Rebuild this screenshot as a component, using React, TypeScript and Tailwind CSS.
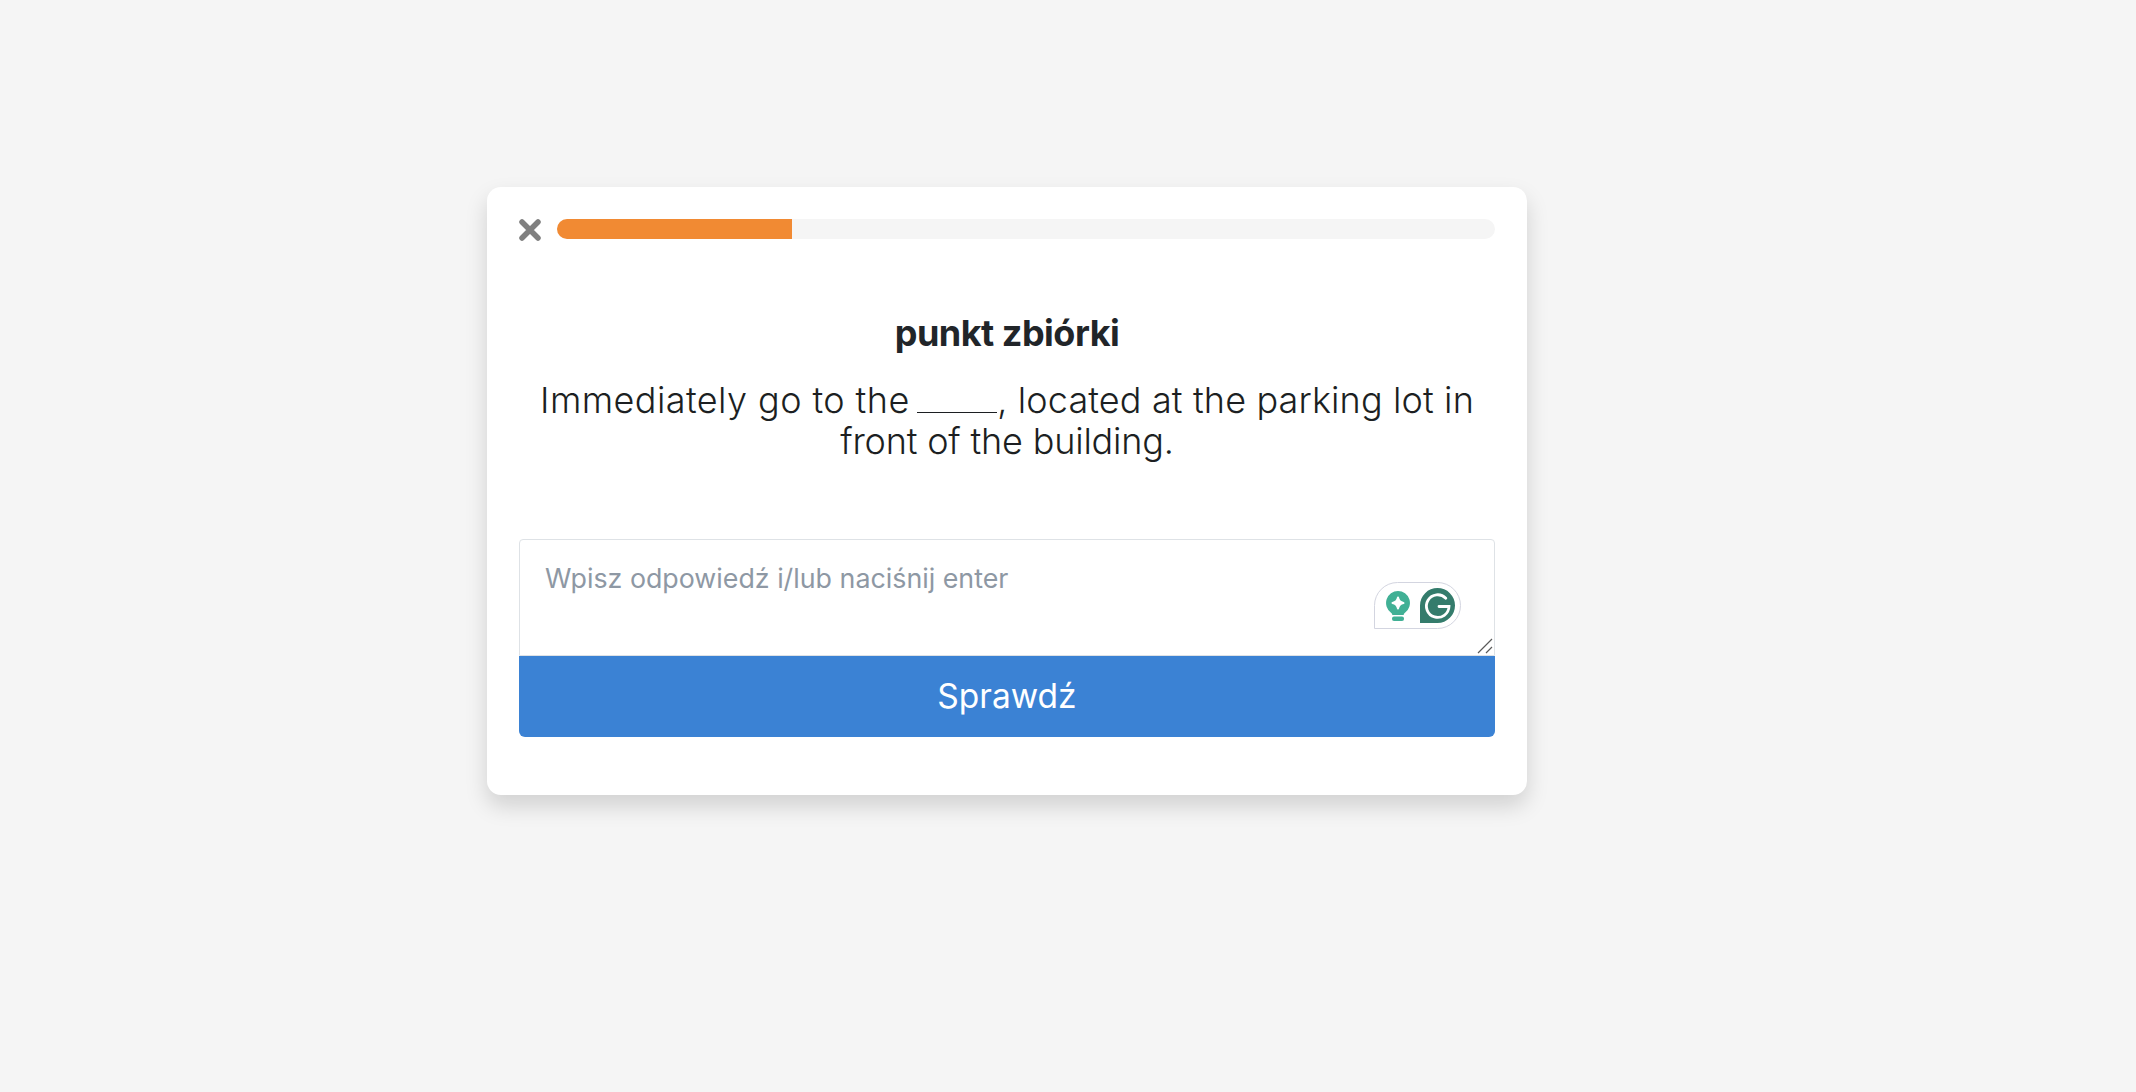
const GrammarlyBadge = () => (
  <div className="absolute left-[855px] top-[43px] flex h-[47px] w-[87px] items-center gap-[10px] rounded-[24px] rounded-bl-none border border-[#d3d5e0] bg-white pl-[11px]">
    <svg width="24" height="30" viewBox="0 0 24 30">
      <path d="M12 0a12 12 0 0 0-7 21.700c.9.7 1.200 1.300 1.300 2.300h11.400c.1-1 .4-1.600 1.300-2.300A12 12 0 0 0 12 0z" fill="#41b095" />
      <path d="M12 6.500c.7 3.600 2 4.800 5.500 5.500-3.500.7-4.800 1.900-5.500 5.500-.7-3.600-2-4.800-5.500-5.500 3.500-.7 4.800-1.900 5.500-5.500z" fill="#fff" stroke="#fff" strokeWidth="2" strokeLinejoin="round" />
      <rect x="6" y="25.500" width="12" height="4.500" rx="2" fill="#41b095" />
    </svg>
    <svg width="35" height="35" viewBox="0 0 35 35">
      <path d="M17.500 0a17.500 17.500 0 0 1 0 35H0V17.500A17.500 17.500 0 0 1 17.500 0z" fill="#347c6c" />
      <path d="M25.800 10.200a11.300 11.300 0 1 0 3.200 8.300H19" fill="none" stroke="#fff" strokeWidth="2.800" strokeLinecap="round" />
    </svg>
  </div>
);

const ResizeHandle = () => (
  <svg className="absolute left-[958px] top-[99px]" width="16" height="16" viewBox="0 0 16 16">
    <path d="M1 15L15 1M9 15l6-6" stroke="#5a5a5a" strokeWidth="1.200" />
  </svg>
);

export default function App() {
  return (
    <div className="min-h-[1092px] bg-[#f5f5f5] pl-[487px] pt-[187px] font-['Inter',sans-serif]">
      <div className="h-[608px] w-[1040px] rounded-[14px] bg-white p-[32px] shadow-[0_11px_22px_rgba(0,0,0,0.15)]">
        <div className="flex items-center gap-[16px]">
          <svg className="-mb-[2px]" width="22" height="22" viewBox="0 0 22 22">
            <path d="M3 3l16 16M19 3L3 19" stroke="#808080" strokeWidth="5.500" strokeLinecap="round" />
          </svg>
          <div className="h-[20px] flex-1 overflow-hidden rounded-[10px] bg-[#f5f5f5]">
            <div className="h-full w-[235px] bg-[#f18a33]" />
          </div>
        </div>

        <h1 className="mt-[72px] text-center text-[36px] leading-[44px] font-bold tracking-[-0.5px] text-[#212529]">
          punkt zbiórki
        </h1>
        <p className="mt-[25px] text-center text-[36px] leading-[41px] font-light tracking-[0.13px] text-[#1c1f22]">
          <span className="tracking-[0.42px]">Immediately go to the </span>
          <span className="-ml-[3px] inline-block h-[25px] w-[80px] border-b border-[#1c1f22] align-baseline" />
          , located at the parking lot in
          <br />
          <span className="tracking-[-0.19px]">front of the building.</span>
        </p>

        <div className="relative mt-[77px]">
          <textarea
            placeholder="Wpisz odpowiedź i/lub naciśnij enter"
            className="block h-[117px] w-full resize-none rounded-t-[4px] border border-[#dee2e6] bg-white px-[25px] py-[20px] text-[26.8px] leading-[36px] text-[#212529] outline-none placeholder:text-[#8e98a4]"
          />
          <GrammarlyBadge />
          <ResizeHandle />
          <button className="block h-[81px] w-full rounded-b-[6px] bg-[#3b82d4] text-center text-[33.5px] text-white">
            Sprawdź
          </button>
        </div>
      </div>
    </div>
  );
}
